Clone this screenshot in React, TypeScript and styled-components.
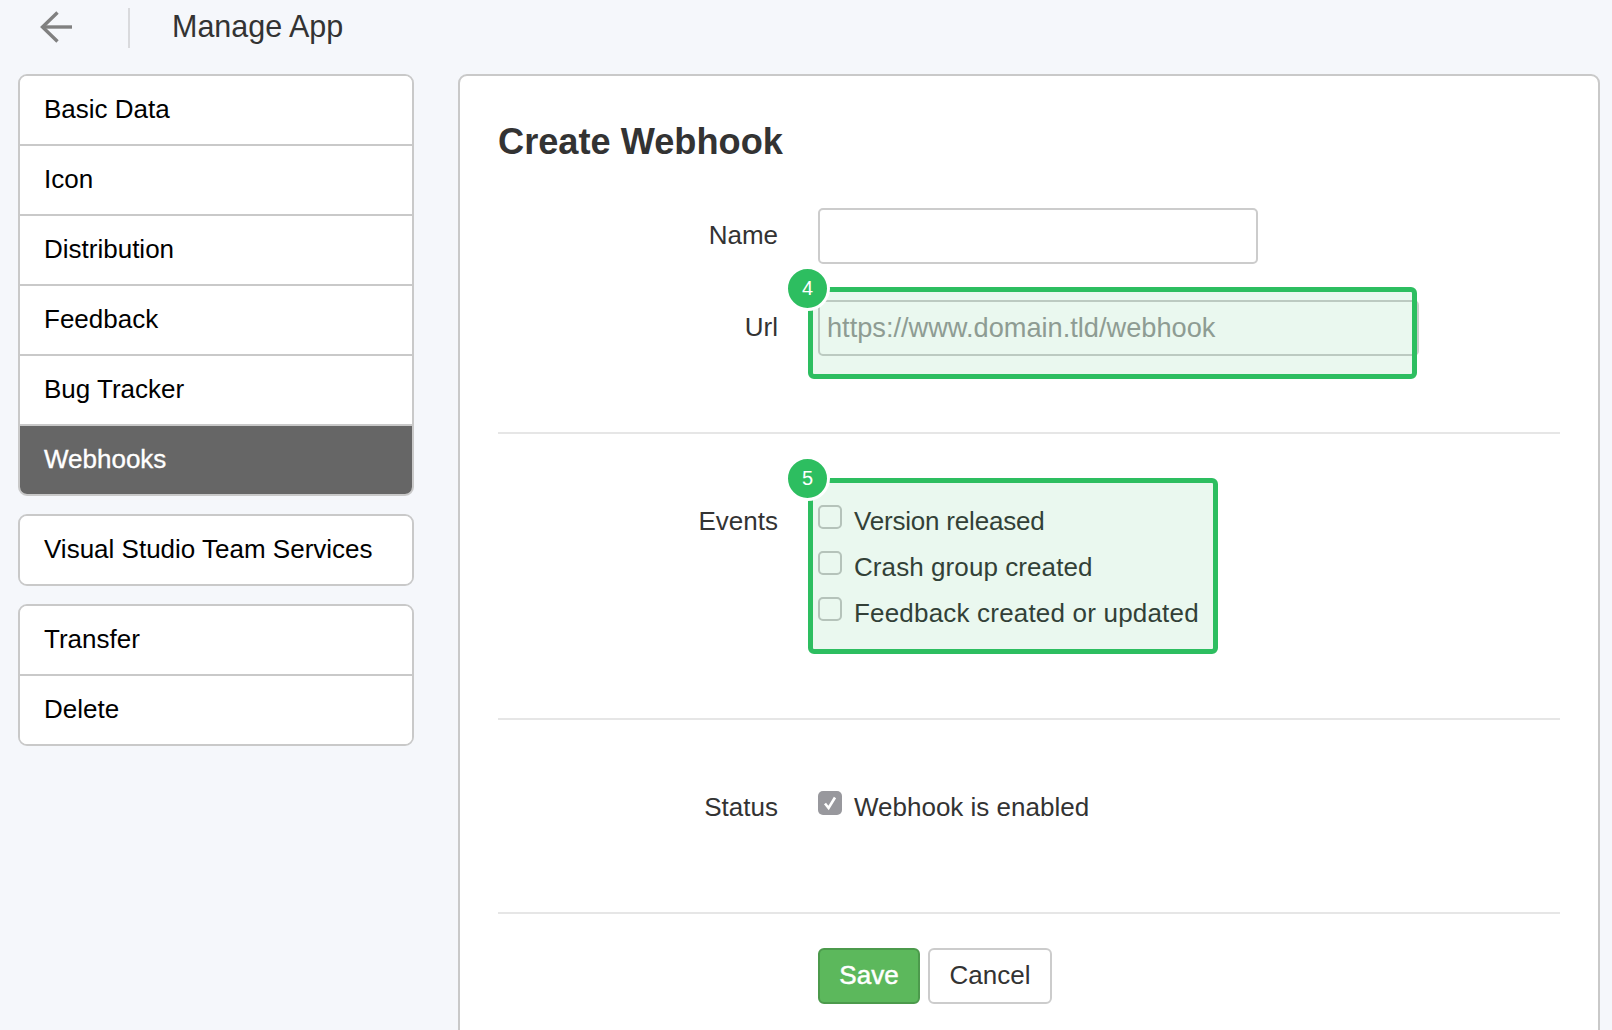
import React from 'react'
import styled, { createGlobalStyle } from 'styled-components'

const GlobalStyle = createGlobalStyle`
  html, body {
    margin: 0;
    padding: 0;
    height: 1030px;
    overflow: hidden;
    background: #f5f7fb;
    font-family: 'Liberation Sans', Arial, sans-serif;
    color: #333;
  }
  * {
    box-sizing: border-box;
  }
`

const Page = styled.div`
  height: 1030px;
  overflow: hidden;
`

const TopBar = styled.header`
  display: flex;
  align-items: center;
  height: 74px;
  padding: 0 0 22px 40px;
`

const BackLink = styled.a`
  display: flex;
  width: 32px;
  margin-top: 2px;
  margin-right: 56px;
`

const Separator = styled.div`
  width: 2px;
  height: 40px;
  margin-right: 42px;
  margin-top: 4px;
  background: #d9dadd;
`

const PageTitle = styled.h1`
  margin: -1px 0 0;
  font-size: 30.5px;
  font-weight: 400;
  line-height: 50px;
  color: #333;
`

const Content = styled.div`
  display: flex;
  align-items: flex-start;
  padding-left: 18px;
`

const Sidebar = styled.nav`
  display: flex;
  flex-direction: column;
  gap: 18px;
  width: 396px;
  margin-right: 44px;
`

const MenuGroup = styled.ul<{ $rows: number }>`
  display: flex;
  flex-direction: column;
  height: ${(props) => props.$rows * 70 + 2}px;
  margin: 0;
  padding: 0;
  list-style-type: none;
  overflow: hidden;
  background: #fff;
  border: 2px solid #c9c9c9;
  border-radius: 9px;
`

const MenuItem = styled.li<{ $active?: boolean }>`
  flex: 1;
  display: flex;
  align-items: center;
  padding: 0 0 2px 24px;
  font-size: 26px;
  color: ${(props) => (props.$active ? '#fff' : '#000')};
  -webkit-text-stroke: ${(props) => (props.$active ? '0.35px #fff' : '0')};
  background: ${(props) => (props.$active ? '#666' : '#fff')};
  & + & {
    border-top: 2px solid #c9c9c9;
  }
`

const Panel = styled.main`
  width: 1142px;
  height: 1000px;
  padding: 0 38px;
  background: #fff;
  border: 2px solid #c9c9c9;
  border-radius: 9px;
`

const Heading = styled.h2`
  margin: 46px 0 46px;
  font-size: 36.2px;
  font-weight: 700;
  line-height: 40px;
  color: #333;
`

const FormRow = styled.div<{ $gap?: number }>`
  display: grid;
  grid-template-columns: 280px 1fr;
  column-gap: 40px;
  margin-bottom: ${(props) => props.$gap ?? 0}px;
`

const Label = styled.label<{ $height: number }>`
  font-size: 26px;
  line-height: ${(props) => props.$height}px;
  text-align: right;
  color: #333;
`

const Field = styled.div`
  position: relative;
`

const TextInput = styled.input<{ $wide?: boolean }>`
  display: block;
  width: ${(props) => (props.$wide ? 601 : 440)}px;
  height: 56px;
  padding: 0 7px;
  font-family: inherit;
  font-size: 27.2px;
  color: #333;
  background: #fff;
  border: 2px solid #ccc;
  border-radius: 5px;
  outline: none;
  &::placeholder {
    color: #999;
    opacity: 1;
  }
`

const Highlight = styled.div<{ $top: number; $width: number; $height: number }>`
  position: absolute;
  top: ${(props) => props.$top}px;
  left: -10px;
  width: ${(props) => props.$width}px;
  height: ${(props) => props.$height}px;
  background: rgba(45, 190, 96, 0.1);
  border: 5px solid #2dbe60;
  border-radius: 6px;
  pointer-events: none;
`

const Badge = styled.span<{ $top: number }>`
  position: absolute;
  top: ${(props) => props.$top}px;
  left: -28px;
  display: flex;
  align-items: center;
  justify-content: center;
  width: 45px;
  height: 45px;
  font-size: 20px;
  color: #fff;
  background: #2dbe60;
  border: 3px solid #fff;
  border-radius: 50%;
`

const Divider = styled.hr<{ $top: number; $bottom: number }>`
  height: 2px;
  margin: ${(props) => props.$top}px 0 ${(props) => props.$bottom}px;
  background: #e6e6e6;
  border: 0;
`

const CheckRow = styled.div<{ $tracking?: number }>`
  display: flex;
  align-items: flex-start;
  height: 46px;
  font-size: 26px;
  line-height: 46px;
  letter-spacing: ${(props) => props.$tracking ?? 0}px;
  color: #333;
`

const CheckBox = styled.span<{ $checked?: boolean }>`
  display: flex;
  align-items: center;
  justify-content: center;
  flex: none;
  width: 24px;
  height: 24px;
  margin-top: 7px;
  margin-right: 12px;
  background: ${(props) => (props.$checked ? '#98989d' : '#fff')};
  border: ${(props) => (props.$checked ? '0' : '2px solid #c4c4c4')};
  border-radius: 5px;
`

const Actions = styled.div`
  display: flex;
  gap: 8px;
  padding-left: 320px;
`

const Button = styled.button<{ $primary?: boolean }>`
  height: 56px;
  width: ${(props) => (props.$primary ? 102 : 124)}px;
  padding: 0 0 1px;
  font-family: inherit;
  font-size: 26px;
  color: ${(props) => (props.$primary ? '#fff' : '#333')};
  -webkit-text-stroke: ${(props) => (props.$primary ? '0.5px #fff' : '0')};
  background: ${(props) => (props.$primary ? '#5cb85c' : '#fff')};
  border: 2px solid ${(props) => (props.$primary ? '#4c9a4c' : '#ccc')};
  border-radius: 6px;
`

const mainMenu = ['Basic Data', 'Icon', 'Distribution', 'Feedback', 'Bug Tracker', 'Webhooks']
const events = [
  { label: 'Version released', tracking: -0.2 },
  { label: 'Crash group created', tracking: 0.08 },
  { label: 'Feedback created or updated', tracking: 0.19 },
]

const BackArrow = () => (
  <svg width="32" height="32" viewBox="0 0 32 32" fill="none" stroke="#808080" strokeWidth="3.4">
    <path d="M32 16H2.5" />
    <path d="M17.5 1.5L2.5 16l15 14.5" />
  </svg>
)

const CheckMark = () => (
  <svg width="18" height="18" viewBox="0 0 18 18" fill="none" stroke="#fff" strokeWidth="2.6">
    <path d="M4 9.5l3.6 4.5L14 3.5" />
  </svg>
)

const App = () => {
  return (
    <Page>
      <GlobalStyle />
      <TopBar>
        <BackLink>
          <BackArrow />
        </BackLink>
        <Separator />
        <PageTitle>Manage App</PageTitle>
      </TopBar>
      <Content>
        <Sidebar>
          <MenuGroup $rows={6}>
            {mainMenu.map((item) => (
              <MenuItem key={item} $active={item === 'Webhooks'}>
                {item}
              </MenuItem>
            ))}
          </MenuGroup>
          <MenuGroup $rows={1}>
            <MenuItem>Visual Studio Team Services</MenuItem>
          </MenuGroup>
          <MenuGroup $rows={2}>
            <MenuItem>Transfer</MenuItem>
            <MenuItem>Delete</MenuItem>
          </MenuGroup>
        </Sidebar>
        <Panel>
          <Heading>Create Webhook</Heading>
          <FormRow $gap={36}>
            <Label $height={54}>Name</Label>
            <Field>
              <TextInput />
            </Field>
          </FormRow>
          <FormRow>
            <Label $height={54}>Url</Label>
            <Field>
              <TextInput $wide placeholder="https://www.domain.tld/webhook" />
              <Highlight $top={-13} $width={609} $height={92}>
                <Badge $top={-26}>4</Badge>
              </Highlight>
            </Field>
          </FormRow>
          <Divider $top={76} $bottom={64} />
          <FormRow>
            <Label $height={46}>Events</Label>
            <Field>
              {events.map((event) => (
                <CheckRow key={event.label} $tracking={event.tracking}>
                  <CheckBox />
                  {event.label}
                </CheckRow>
              ))}
              <Highlight $top={-20} $width={410} $height={176}>
                <Badge $top={-27}>5</Badge>
              </Highlight>
            </Field>
          </FormRow>
          <Divider $top={82} $bottom={64} />
          <FormRow>
            <Label $height={46}>Status</Label>
            <Field>
              <CheckRow>
                <CheckBox $checked>
                  <CheckMark />
                </CheckBox>
                Webhook is enabled
              </CheckRow>
            </Field>
          </FormRow>
          <Divider $top={82} $bottom={34} />
          <Actions>
            <Button $primary>Save</Button>
            <Button>Cancel</Button>
          </Actions>
        </Panel>
      </Content>
    </Page>
  )
}

export default App
